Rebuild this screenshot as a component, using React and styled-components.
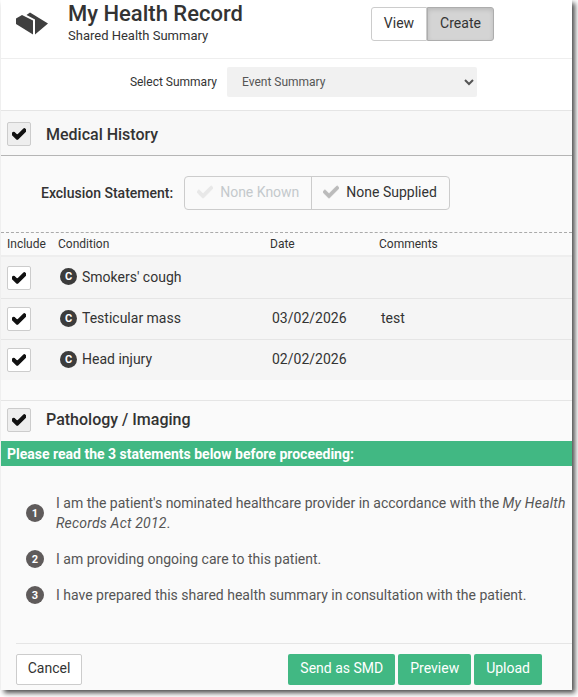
import styled, { createGlobalStyle } from 'styled-components';
import { FaCheck } from 'react-icons/fa';

const GlobalStyle = createGlobalStyle`
  html, body {
    margin: 0;
    padding: 0;
    background: #fff;
  }
  body {
    font-family: Roboto, "Liberation Sans", sans-serif;
    color: #333;
  }
`;

const conditions = [
  { name: "Smokers' cough", date: '', comments: '' },
  { name: 'Testicular mass', date: '03/02/2026', comments: 'test' },
  { name: 'Head injury', date: '02/02/2026', comments: '' },
];

function App() {
  const statements = [
    <>
      I am the patient's nominated healthcare provider in accordance with the <ActName>My Health Records Act 2012</ActName>.
    </>,
    'I am providing ongoing care to this patient.',
    'I have prepared this shared health summary in consultation with the patient.',
  ];

  return (
    <Page>
      <GlobalStyle />
      <Panel>
        <Header>
          <Logo viewBox="16 11 32 24">
            <polygon points="16,18.5 22,15 33,20.5 33,34.5 16,24" fill="#3f3f3f" />
            <polygon points="30,12.5 48,23.5 35,34.5 35,19.5 26.5,15" fill="#3f3f3f" />
          </Logo>
          <TitleBlock>
            <Title>My Health Record</Title>
            <Subtitle>Shared Health Summary</Subtitle>
          </TitleBlock>
          <Toggle>
            <ToggleButton>View</ToggleButton>
            <ToggleButton $active>Create</ToggleButton>
          </Toggle>
        </Header>

        <SelectRow>
          <SelectLabel>Select Summary</SelectLabel>
          <SummarySelect defaultValue="Event Summary">
            <option>Event Summary</option>
          </SummarySelect>
        </SelectRow>

        <SectionHeader>
          <CheckBox $shaded><FaCheck /></CheckBox>
          <SectionTitle>Medical History</SectionTitle>
        </SectionHeader>

        <SectionBody>
          <ExclusionRow>
            <ExclusionLabel>Exclusion Statement:</ExclusionLabel>
            <ButtonGroup>
              <ExclusionButton $disabled><FaCheck />None Known</ExclusionButton>
              <ExclusionButton><FaCheck />None Supplied</ExclusionButton>
            </ButtonGroup>
          </ExclusionRow>

          <TableHead>
            <span>Include</span>
            <span>Condition</span>
            <span>Date</span>
            <span>Comments</span>
          </TableHead>
          {conditions.map((row) => (
            <TableRow key={row.name}>
              <CheckBox><FaCheck /></CheckBox>
              <ConditionCell>
                <Badge>C</Badge>
                {row.name}
              </ConditionCell>
              <TextCell>{row.date}</TextCell>
              <TextCell>{row.comments}</TextCell>
            </TableRow>
          ))}
        </SectionBody>

        <PathologyHeader>
          <CheckBox $shaded><FaCheck /></CheckBox>
          <SectionTitle>Pathology / Imaging</SectionTitle>
        </PathologyHeader>

        <Notice>Please read the 3 statements below before proceeding:</Notice>

        <Statements>
          {statements.map((text, i) => (
            <Statement key={i}>
              <NumberDot>{i + 1}</NumberDot>
              <StatementText>{text}</StatementText>
            </Statement>
          ))}
        </Statements>

        <Footer>
          <CancelButton>Cancel</CancelButton>
          <Actions>
            <GreenButton>Send as SMD</GreenButton>
            <GreenButton>Preview</GreenButton>
            <GreenButton>Upload</GreenButton>
          </Actions>
        </Footer>
      </Panel>
    </Page>
  );
}

export default App;

const Page = styled.div`
  height: 697px;
  overflow: hidden;
`;

const Panel = styled.div`
  width: 571px;
  height: 690px;
  margin-left: 1px;
  background: #fafafa;
  box-shadow: 3px 3px 5px rgba(0, 0, 0, 0.7);
  overflow: hidden;
`;

const Header = styled.div`
  height: 58px;
  display: flex;
  align-items: flex-start;
  background: #fff;
  border-bottom: 1px solid #eee;
`;

const Logo = styled.svg`
  width: 32px;
  height: 24px;
  margin: 11px 0 0 15px;
  flex: none;
`;

const TitleBlock = styled.div`
  margin-left: 20px;
  width: 303px;
`;

const Title = styled.div`
  font-size: 22px;
  font-weight: 500;
  line-height: 26px;
  margin-top: 1px;
  color: #333;
`;

const Subtitle = styled.div`
  font-size: 13px;
  line-height: 16px;
  margin-top: 1px;
  color: #333;
`;

const Toggle = styled.div`
  display: flex;
  margin-top: 7px;
`;

const ToggleButton = styled.button`
  width: ${(p) => (p.$active ? '67px' : '56px')};
  height: 34px;
  padding: 0 0 2px;
  font-family: inherit;
  font-size: 14px;
  color: #333;
  background: ${(p) => (p.$active ? '#d4d4d4' : '#fff')};
  border: 1px solid ${(p) => (p.$active ? '#adadad' : '#ccc')};
  border-radius: ${(p) => (p.$active ? '0 3px 3px 0' : '3px 0 0 3px')};
  box-shadow: ${(p) => (p.$active ? 'inset 0 2px 4px rgba(0, 0, 0, 0.12)' : 'none')};
`;

const SelectRow = styled.div`
  height: 45px;
  padding: 0 95px 6px 0;
  display: flex;
  align-items: center;
  justify-content: flex-end;
  gap: 10px;
  background: #fff;
  border-bottom: 1px solid #e5e5e5;
`;

const SelectLabel = styled.label`
  font-size: 12px;
  color: #333;
`;

const SummarySelect = styled.select`
  width: 250px;
  height: 30px;
  padding: 0 11px;
  font-family: inherit;
  font-size: 12px;
  color: #555;
  background-color: #f1f1f1;
  border: none;
  border-radius: 2px;
`;

const SectionHeader = styled.div`
  height: 42px;
  padding: 2px 0 0 6px;
  display: flex;
  align-items: center;
  gap: 15px;
  background: #f8f8f8;
  border-bottom: 1px solid #b5b5b5;
`;

const PathologyHeader = styled(SectionHeader)`
  height: 37px;
  padding: 0 0 3px 6px;
  border-top: 1px solid #e5e5e5;
  border-bottom: none;
  background: #fafafa;
`;

const SectionTitle = styled.div`
  font-size: 16px;
  font-weight: 500;
  color: #333;
`;

const CheckBox = styled.div`
  width: 24px;
  height: 24px;
  box-sizing: border-box;
  display: flex;
  align-items: center;
  justify-content: center;
  background: ${(p) => (p.$shaded ? '#eee' : '#fff')};
  border: 1px solid #ccc;
  border-radius: 2px;
  color: #111;
  font-size: 14px;
  flex: none;
  svg {
    stroke: currentColor;
    stroke-width: 45;
  }
`;

const SectionBody = styled.div`
  height: 244px;
  background: #fafafa;
`;

const ExclusionRow = styled.div`
  height: 77px;
  box-sizing: border-box;
  display: flex;
  align-items: center;
  gap: 11px;
  padding: 0 0 2px 40px;
  border-bottom: 1px dashed #aaa;
`;

const ExclusionLabel = styled.div`
  font-size: 14px;
  font-weight: 500;
  color: #333;
`;

const ButtonGroup = styled.div`
  display: flex;
  height: 34px;
  box-sizing: border-box;
  background: #fafafa;
  border: 1px solid #ccc;
  border-radius: 4px;
`;

const ExclusionButton = styled.div`
  display: flex;
  align-items: center;
  gap: 7px;
  padding: 0 12px 2px;
  font-size: 14px;
  color: ${(p) => (p.$disabled ? '#c4c9cc' : '#333')};
  & + & {
    border-left: 1px solid #ccc;
    padding-left: 11px;
  }
  svg {
    font-size: 16px;
    stroke: currentColor;
    stroke-width: 30;
    color: ${(p) => (p.$disabled ? '#e8e8e8' : '#bbb')};
  }
`;

const columns = '51px 212px 109px 1fr';

const TableHead = styled.div`
  height: 24px;
  box-sizing: border-box;
  display: grid;
  grid-template-columns: ${columns};
  align-items: center;
  padding-left: 6px;
  font-size: 12px;
  color: #333;
  border-bottom: 2px solid #eee;
`;

const TableRow = styled.div`
  height: 41px;
  box-sizing: border-box;
  display: grid;
  grid-template-columns: ${columns};
  align-items: center;
  padding-left: 6px;
  font-size: 14px;
  color: #333;
  background: #f5f5f5;
  & + & {
    border-top: 1px solid #e5e5e5;
  }
`;

const TextCell = styled.div`
  padding: 0 0 2px 2px;
`;

const ConditionCell = styled(TextCell)`
  display: flex;
  align-items: center;
  gap: 5px;
`;

const Badge = styled.span`
  width: 17px;
  height: 17px;
  border-radius: 50%;
  display: inline-flex;
  align-items: center;
  justify-content: center;
  background: #3c3c3c;
  color: #fff;
  font-size: 11px;
  font-weight: 700;
`;

const Notice = styled.div`
  height: 25px;
  display: flex;
  align-items: center;
  padding-left: 6px;
  background: #41b883;
  color: #fff;
  font-size: 14px;
  font-weight: 700;
`;

const Statements = styled.div`
  height: 177px;
  box-sizing: border-box;
  padding: 27px 0 0 25px;
  display: flex;
  flex-direction: column;
  gap: 16px;
`;

const Statement = styled.div`
  display: flex;
  align-items: center;
  gap: 12px;
`;

const NumberDot = styled.span`
  width: 18px;
  height: 18px;
  border-radius: 50%;
  display: inline-flex;
  align-items: center;
  justify-content: center;
  background: #5f5b5b;
  color: #fff;
  font-size: 11px;
  font-weight: 700;
  flex: none;
`;

const StatementText = styled.div`
  font-size: 14px;
  line-height: 20px;
  color: #555;
`;

const ActName = styled.em`
  letter-spacing: 0.2px;
`;

const Footer = styled.div`
  margin-left: 15px;
  padding: 10px 30px 0 0;
  display: flex;
  justify-content: space-between;
  border-top: 1px solid #e5e5e5;
`;

const CancelButton = styled.button`
  width: 66px;
  height: 31px;
  padding: 0 0 3px;
  font-family: inherit;
  font-size: 14px;
  color: #333;
  background: #fff;
  border: 1px solid #ccc;
  border-radius: 2px;
`;

const Actions = styled.div`
  display: flex;
  gap: 3px;
`;

const GreenButton = styled.button`
  height: 31px;
  padding: 0 12px 3px;
  font-family: inherit;
  font-size: 14px;
  color: #fff;
  background: #41b883;
  border: none;
  border-radius: 2px;
`;
